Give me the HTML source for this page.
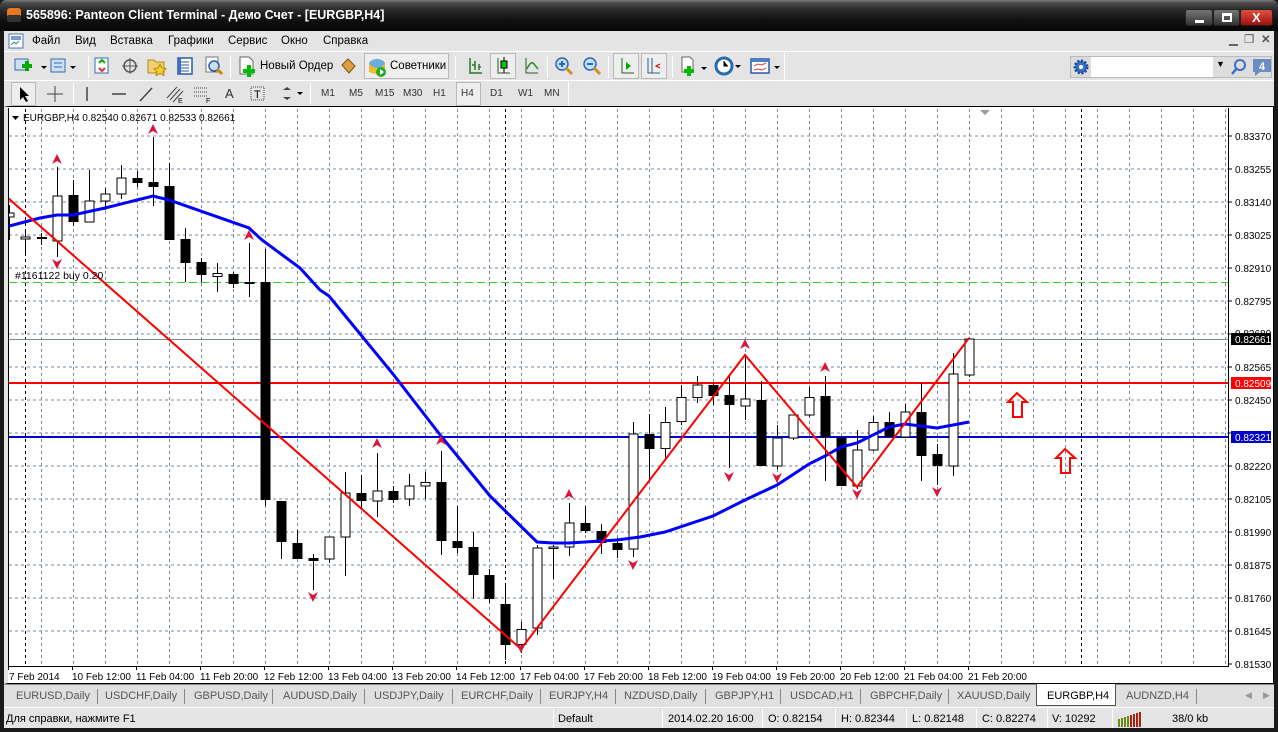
<!DOCTYPE html>
<html><head><meta charset="utf-8"><style>
*{margin:0;padding:0;box-sizing:border-box}
body{width:1278px;height:732px;overflow:hidden;background:#1a1a1a;font-family:"Liberation Sans",Tahoma,sans-serif;font-size:11px;color:#000;position:relative}
.a{position:absolute;white-space:nowrap}
#title{left:0;top:0;width:1278px;height:31px;background:linear-gradient(#7a7a7a 0,#4a4a4a 3px,#2a2a2a 10px,#111 20px,#050505 31px);border-radius:6px 6px 0 0}
#title span{position:absolute;left:26px;top:8px;color:#fff;font-weight:bold;font-size:12.5px}
.wb{top:9px;height:17px;border:1px solid #222;border-radius:3px;background:linear-gradient(#777,#333)}
#menu{left:4px;top:31px;width:1270px;height:20px;background:#e4e4e4}
#tb1{left:4px;top:51px;width:1270px;height:29px;background:#e4e4e4;border-top:1px solid #fff}
#tb2{left:4px;top:80px;width:1270px;height:26px;background:#e4e4e4;border-top:1px solid #fff}
.sep{position:absolute;width:1px;background:#a0a0a0;border-right:1px solid #fff}
#chartbg{left:4px;top:106px;width:1270px;height:578px;background:#fff;border:1px solid #000;border-left:4px solid #e4e4e4}
#tabs{left:4px;top:684px;width:1270px;height:23px;background:#e0e0e0;border-top:1px solid #888}
#status{left:4px;top:707px;width:1270px;height:21px;background:#e4e4e4;border-top:1px solid #fff}
.tab{position:absolute;top:5px;color:#555;font-size:11px}
.ts{position:absolute;top:4px;width:1px;height:15px;background:#888}
.st{position:absolute;top:5px;font-size:11px}
.ss{position:absolute;top:1px;width:1px;height:19px;background:#a0a0a0;border-right:1px solid #fff}
.m{position:absolute;top:4px;font-size:11.5px}
.tf{position:absolute;top:7px;font-size:10px;color:#333}
.ic{position:absolute}
</style></head><body>
<div class="a" id="title"><svg class="ic" style="left:6px;top:7px" width="16" height="16"><rect x="1" y="1" width="14" height="14" rx="3" fill="#e87820"/><rect x="1" y="8" width="14" height="7" rx="2" fill="#333"/></svg><span>565896: Panteon Client Terminal - Демо Счет - [EURGBP,H4]</span>
<div class="a wb" style="left:1185px;width:28px"><div style="position:absolute;left:9px;top:10px;width:9px;height:3px;background:#fff"></div></div>
<div class="a wb" style="left:1213px;width:27px"><div style="position:absolute;left:8px;top:3px;width:10px;height:9px;border:2px solid #fff;border-top-width:3px"></div></div>
<div class="a wb" style="left:1240px;width:33px;background:linear-gradient(#e05040,#a01010)"><span style="left:11px;top:0px;font-size:13px;font-weight:bold">X</span></div>
</div>
<div class="a" id="menu">
<svg class="ic" style="left:4px;top:2px" width="16" height="16"><rect x="1" y="1" width="14" height="14" fill="#fff" stroke="#4a78b0"/><rect x="3" y="3" width="10" height="4" fill="#7aa0d0"/><path d="M3 12l3-3 2 2 3-3" stroke="#4a78b0" fill="none"/></svg>
<span class="m" style="left:28px">Файл</span><span class="m" style="left:71px">Вид</span><span class="m" style="left:106px">Вставка</span><span class="m" style="left:164px">Графики</span><span class="m" style="left:224px">Сервис</span><span class="m" style="left:277px">Окно</span><span class="m" style="left:319px">Справка</span>
<span class="m" style="left:1225px;top:1px;color:#555">▁</span><span class="m" style="left:1240px;top:1px;color:#555">❐</span><span class="m" style="left:1257px;top:1px;color:#555;font-weight:bold">✕</span>
</div>
<div class="a" id="tb1">
<svg class="ic" style="left:10px;top:5px" width="36" height="20"><rect x="1" y="2" width="13" height="11" fill="#cfe0f4" stroke="#3a6aa8"/><path d="M8 9h10M13 4v10" stroke="#0a0" stroke-width="4"/><path d="M27 9l3 3 3-3z" fill="#000"/></svg>
<svg class="ic" style="left:46px;top:5px" width="30" height="20"><rect x="1" y="2" width="14" height="13" fill="#cfe0f4" stroke="#3a6aa8"/><path d="M4 6h8M4 10h8" stroke="#3a6aa8"/><path d="M20 9l3 3 3-3z" fill="#000"/></svg>
<div class="sep" style="left:84px;top:4px;height:22px"></div>
<svg class="ic" style="left:89px;top:5px" width="18" height="18"><rect x="2" y="1" width="13" height="15" fill="#fff" stroke="#3a6aa8"/><path d="M6 6l3-3 3 3" stroke="#0a0" stroke-width="2" fill="none"/><path d="M6 11l3 3 3-3" stroke="#d33" stroke-width="2" fill="none"/></svg>
<svg class="ic" style="left:117px;top:5px" width="18" height="18"><circle cx="9" cy="9" r="6" stroke="#555" fill="none" stroke-width="1.5"/><path d="M9 1v16M1 9h16" stroke="#555"/></svg>
<svg class="ic" style="left:143px;top:4px" width="20" height="20"><path d="M1 4h6l2 2h8v11H1z" fill="#f0d070" stroke="#b08a20"/><path d="M13 8l2 4 4 .5-3 3 1 4-4-2-4 2 1-4-3-3 4-.5z" fill="#f8d020" stroke="#b08a20"/></svg>
<svg class="ic" style="left:172px;top:5px" width="18" height="18"><rect x="2" y="1" width="14" height="16" fill="#fff" stroke="#2a5aa0" stroke-width="1.5"/><path d="M5 5h8M5 8h8M5 11h8M5 14h8" stroke="#2a5aa0"/><rect x="2" y="1" width="3" height="16" fill="#3a70c0"/></svg>
<svg class="ic" style="left:200px;top:4px" width="20" height="20"><rect x="2" y="1" width="12" height="15" fill="#fff" stroke="#777"/><circle cx="10" cy="10" r="5" fill="#cde" stroke="#2a5aa0" stroke-width="1.5"/><path d="M13 13l5 5" stroke="#c80" stroke-width="3"/></svg>
<div class="sep" style="left:226px;top:4px;height:22px"></div>
<svg class="ic" style="left:233px;top:4px" width="22" height="22"><path d="M3 1h9l4 4v13H3z" fill="#fff" stroke="#666"/><path d="M6 15h12M12 9v12" stroke="#0b0" stroke-width="4"/></svg>
<span class="m" style="left:256px;top:8px;font-size:11.5px">Новый Ордер</span>
<svg class="ic" style="left:335px;top:5px" width="18" height="18"><path d="M3 8l6-6 7 7-6 7z" fill="#d8a040" stroke="#805010"/></svg>
<div class="a" style="left:360px;top:1px;width:85px;height:26px;border:1px solid #b8b8b8;background:#eee"></div>
<svg class="ic" style="left:363px;top:4px" width="20" height="22"><ellipse cx="10" cy="8" rx="8" ry="5" fill="#6aaedc"/><path d="M2 8q8 8 16 0v8q-8 4-16 0z" fill="#f0c020"/><circle cx="14" cy="16" r="5" fill="#2a2"/><path d="M13 13l4 3-4 3z" fill="#fff"/></svg>
<span class="m" style="left:386px;top:8px">Советники</span>
<div class="sep" style="left:451px;top:4px;height:22px"></div>
<svg class="ic" style="left:462px;top:4px" width="18" height="20"><path d="M4 2v15h12M9 5v9M13 8v6M9 9h-3M13 11h2" stroke="#2a7a2a" stroke-width="1.5" fill="none"/></svg>
<div class="a" style="left:486px;top:1px;width:26px;height:26px;border:1px solid #b8b8b8;background:#eee"></div>
<svg class="ic" style="left:490px;top:4px" width="18" height="20"><path d="M4 2v15h12" stroke="#2a5a2a" fill="none"/><path d="M10 1v16" stroke="#000"/><rect x="7" y="5" width="6" height="7" fill="#0c0" stroke="#000"/></svg>
<svg class="ic" style="left:518px;top:4px" width="18" height="20"><path d="M4 2v15h12" stroke="#2a5a2a" fill="none"/><path d="M5 13q4-9 7-5l4 5" stroke="#2a8a2a" stroke-width="1.5" fill="none"/></svg>
<div class="sep" style="left:543px;top:4px;height:22px"></div>
<svg class="ic" style="left:550px;top:4px" width="20" height="20"><circle cx="8" cy="8" r="6" fill="#bfe0fa" stroke="#2a6ab0" stroke-width="1.5"/><path d="M5 8h6M8 5v6" stroke="#2a6ab0" stroke-width="2"/><path d="M12 12l6 6" stroke="#d09020" stroke-width="3"/></svg>
<svg class="ic" style="left:578px;top:4px" width="20" height="20"><circle cx="8" cy="8" r="6" fill="#bfe0fa" stroke="#2a6ab0" stroke-width="1.5"/><path d="M5 8h6" stroke="#2a6ab0" stroke-width="2"/><path d="M12 12l6 6" stroke="#d09020" stroke-width="3"/></svg>
<div class="sep" style="left:604px;top:4px;height:22px"></div>
<div class="a" style="left:609px;top:1px;width:26px;height:26px;border:1px solid #b8b8b8;background:#eee"></div>
<svg class="ic" style="left:613px;top:4px" width="18" height="20"><path d="M5 2v15h12" stroke="#2a5a2a" fill="none"/><path d="M9 6l5 4-5 4z" fill="#0a0"/></svg>
<div class="a" style="left:637px;top:1px;width:26px;height:26px;border:1px solid #b8b8b8;background:#eee"></div>
<svg class="ic" style="left:641px;top:4px" width="18" height="20"><path d="M3 2v15h12M7 2v15" stroke="#2a5a8a" fill="none"/><path d="M15 8l-4 2 4 2" stroke="#c00" fill="none"/></svg>
<div class="sep" style="left:668px;top:4px;height:22px"></div>
<svg class="ic" style="left:675px;top:4px" width="30" height="22"><path d="M3 1h8l3 3v12H3z" fill="#fff" stroke="#666"/><path d="M5 15h10M10 10v10" stroke="#0b0" stroke-width="4"/><path d="M22 11l3 3 3-3z" fill="#000"/></svg>
<svg class="ic" style="left:710px;top:4px" width="30" height="22"><circle cx="10" cy="10" r="8" fill="#fff" stroke="#2a6ab0" stroke-width="3"/><path d="M10 5v5h4" stroke="#000"/><path d="M21 9l3 3 3-3z" fill="#000"/></svg>
<svg class="ic" style="left:746px;top:4px" width="32" height="22"><rect x="1" y="3" width="18" height="14" fill="#fff" stroke="#2a5aa0" stroke-width="1.5"/><rect x="1" y="3" width="18" height="3" fill="#4a80c8"/><path d="M4 10l4-2 4 1 4-2M4 14l4-1 4 1 4-2" stroke="#c44" fill="none"/><path d="M24 10l3 3 3-3z" fill="#000"/></svg>
<div class="sep" style="left:780px;top:0px;height:28px"></div>
<div class="a" style="left:1066px;top:4px;width:202px;height:22px;border:1px solid #bbb;background:#ddd"></div>
<svg class="ic" style="left:1068px;top:6px" width="18" height="18"><circle cx="9" cy="9" r="6" fill="#3a70c8" stroke="#1a4a9a" stroke-width="3" stroke-dasharray="2 1.5"/><circle cx="9" cy="9" r="2" fill="#fff"/></svg>
<div class="a" style="left:1087px;top:5px;width:122px;height:20px;background:#fff"></div>
<span class="m" style="left:1212px;top:7px;font-size:9px">▼</span>
<svg class="ic" style="left:1226px;top:6px" width="18" height="18"><circle cx="10" cy="7" r="5" fill="none" stroke="#3a70c8" stroke-width="2"/><path d="M7 10l-5 6" stroke="#3a70c8" stroke-width="2.5"/></svg>
<svg class="ic" style="left:1247px;top:5px" width="22" height="20"><path d="M2 2h18v13H9l-5 4v-4H2z" fill="#6a8cc0"/><text x="8" y="13" fill="#fff" font-size="11" font-weight="bold" font-family="Liberation Sans">4</text></svg>
</div>
<div class="a" id="tb2">
<div class="a" style="left:7px;top:1px;width:25px;height:24px;border:1px solid #b8b8b8;background:#eee"></div>
<svg class="ic" style="left:12px;top:4px" width="16" height="18"><path d="M4 2v13l3-3 3 5 2-1-3-5h4z" fill="#000"/></svg>
<svg class="ic" style="left:42px;top:4px" width="18" height="18"><path d="M9 1v16M1 9h16" stroke="#444"/></svg>
<div class="sep" style="left:69px;top:3px;height:20px"></div>
<svg class="ic" style="left:78px;top:4px" width="10" height="18"><path d="M5 2v14" stroke="#444" stroke-width="1.5"/></svg>
<svg class="ic" style="left:106px;top:4px" width="18" height="18"><path d="M2 9h14" stroke="#444" stroke-width="1.5"/></svg>
<svg class="ic" style="left:133px;top:4px" width="18" height="18"><path d="M3 16l12-13" stroke="#444" stroke-width="1.5"/></svg>
<svg class="ic" style="left:160px;top:3px" width="22" height="20"><path d="M3 14l10-11M6 16l10-11M9 18l10-11" stroke="#444"/><text x="14" y="19" font-size="7" font-family="Liberation Sans">E</text></svg>
<svg class="ic" style="left:188px;top:3px" width="22" height="20"><path d="M2 4h14M2 8h14M2 12h14" stroke="#444" stroke-dasharray="1 1"/><text x="14" y="19" font-size="7" font-family="Liberation Sans">F</text></svg>
<span class="m" style="left:221px;top:5px;font-size:13px;color:#333">A</span>
<svg class="ic" style="left:245px;top:4px" width="18" height="18"><rect x="2" y="2" width="13" height="13" fill="none" stroke="#444" stroke-dasharray="1 1"/><text x="5" y="13" font-size="11" font-family="Liberation Sans">T</text></svg>
<svg class="ic" style="left:276px;top:4px" width="26" height="18"><path d="M3 5l4-3 4 3zM3 12l4 3 4-3z" fill="#444"/><path d="M17 7l3 3 3-3z" fill="#000"/></svg>
<div class="sep" style="left:306px;top:3px;height:20px"></div>
<span class="tf" style="left:317px">M1</span><span class="tf" style="left:345px">M5</span><span class="tf" style="left:371px">M15</span><span class="tf" style="left:399px">M30</span><span class="tf" style="left:429px">H1</span>
<div class="a" style="left:452px;top:1px;width:25px;height:24px;border:1px solid #b8b8b8;background:#eee"></div>
<span class="tf" style="left:457px">H4</span><span class="tf" style="left:486px">D1</span><span class="tf" style="left:514px">W1</span><span class="tf" style="left:540px">MN</span>
<div class="sep" style="left:564px;top:0px;height:25px"></div>
</div>
<div class="a" id="chartbg"></div>
<svg class="a" style="left:0;top:0" width="1278" height="732" font-family="Liberation Sans, sans-serif" font-size="10">
<defs><clipPath id="cc"><rect x="9" y="109" width="1219" height="557"/></clipPath></defs>
<g clip-path="url(#cc)">
<g stroke="#778899" stroke-dasharray="3 3" stroke-width="1" fill="none">
<path d="M9 136H1228M9 169H1228M9 202H1228M9 235H1228M9 268H1228M9 301H1228M9 334H1228M9 367H1228M9 400H1228M9 433H1228M9 466H1228M9 499H1228M9 532H1228M9 565H1228M9 598H1228M9 631H1228"/>
<path d="M41.5 109V665M73.5 109V665M105.5 109V665M137.5 109V665M169.5 109V665M201.5 109V665M233.5 109V665M265.5 109V665M297.5 109V665M329.5 109V665M361.5 109V665M393.5 109V665M425.5 109V665M457.5 109V665M489.5 109V665M521.5 109V665M553.5 109V665M585.5 109V665M617.5 109V665M649.5 109V665M681.5 109V665M713.5 109V665M745.5 109V665M777.5 109V665M809.5 109V665M841.5 109V665M873.5 109V665M905.5 109V665M937.5 109V665M969.5 109V665M1001.5 109V665M1033.5 109V665M1065.5 109V665M1097.5 109V665M1129.5 109V665M1161.5 109V665M1193.5 109V665M1225.5 109V665"/>
</g>
<g stroke="#000" stroke-dasharray="3 3"><path d="M25.5 109V665M505.5 109V665M1081.5 109V665"/></g>
<path d="M9 282.5H1228" stroke="#32cd32" stroke-dasharray="8 4"/>
<path d="M9 339.5H1228" stroke="#778899"/>
<path d="M9 383H1228" stroke="#f00" stroke-width="2"/>
<path d="M9 437H1228" stroke="#0000c8" stroke-width="2"/>
<g stroke="#000" stroke-width="1">
<path d="M9.5 205V240M25.5 230V256M41.5 233V245M57.5 167V257M73.5 180V226M89.5 170V222M105.5 188V210M121.5 165V199M137.5 171V187M153.5 137V206M169.5 163V240M185.5 228V282M201.5 258V282M217.5 263V292M233.5 272V288M249.5 243V297M265.5 249V506M281.5 501V559M297.5 530V558M313.5 554V590M329.5 537V563M345.5 472V576M361.5 475V510M377.5 453V517M393.5 486V503M409.5 474V506M425.5 472V499M441.5 451V555M457.5 506V553M473.5 532V599M489.5 569V603M505.5 583V660M521.5 622V653M537.5 545V635M553.5 545V579M569.5 503V556M585.5 506V533M601.5 524V554M617.5 538V558M633.5 422V557M649.5 414V481M665.5 407V460M681.5 385V425M697.5 376V403M713.5 383V405M729.5 374V468M745.5 354V420M761.5 381V466M777.5 425V469M793.5 415V440M809.5 387V417M825.5 376V481M841.5 436V486M857.5 430V489M873.5 416V451M889.5 412V437M905.5 404V437M921.5 383V481M937.5 444V485M953.5 353V476M969.5 338V377"/>
</g>
<g fill="#000">
<rect x="37" y="237" width="10" height="2"/><rect x="68.5" y="195" width="10" height="27"/><rect x="132.5" y="178" width="10" height="5"/><rect x="148.5" y="182" width="10" height="5"/><rect x="164.5" y="186" width="10" height="54"/><rect x="180.5" y="239" width="10" height="24"/><rect x="196.5" y="262" width="10" height="13"/><rect x="228.5" y="274" width="10" height="10"/><rect x="244.5" y="282" width="10" height="2"/><rect x="260.5" y="282" width="10" height="218"/><rect x="276.5" y="501" width="10" height="41"/><rect x="292.5" y="543" width="10" height="16"/><rect x="308.5" y="558" width="10" height="3"/><rect x="356.5" y="493" width="10" height="8"/><rect x="388.5" y="491" width="10" height="9"/><rect x="436.5" y="482" width="10" height="59"/><rect x="452.5" y="541" width="10" height="7"/><rect x="468.5" y="547" width="10" height="28"/><rect x="484.5" y="575" width="10" height="24"/><rect x="500.5" y="604" width="10" height="41"/><rect x="580.5" y="523" width="10" height="8"/><rect x="596.5" y="531" width="10" height="12"/><rect x="612.5" y="543" width="10" height="7"/><rect x="644.5" y="434" width="10" height="15"/><rect x="708.5" y="385" width="10" height="11"/><rect x="724.5" y="395" width="10" height="10"/><rect x="756.5" y="400" width="10" height="66"/><rect x="820.5" y="396" width="10" height="41"/><rect x="836.5" y="438" width="10" height="48"/><rect x="884.5" y="422" width="10" height="15"/><rect x="916.5" y="412" width="10" height="44"/><rect x="932.5" y="454" width="10" height="12"/>
</g>
<g fill="#fff" stroke="#000">
<rect x="5" y="213" width="9" height="4"/>
<rect x="21" y="237" width="9" height="2"/><rect x="53" y="196" width="9" height="45"/><rect x="85" y="201" width="9" height="21"/><rect x="101" y="194" width="9" height="7"/><rect x="117" y="178" width="9" height="16"/><rect x="213" y="273.5" width="9" height="3"/><rect x="325" y="537" width="9" height="22"/><rect x="341" y="493" width="9" height="44"/><rect x="373" y="491" width="9" height="10"/><rect x="405" y="486" width="9" height="13"/><rect x="421" y="482.5" width="9" height="3.5"/><rect x="517" y="629.5" width="9" height="15"/><rect x="533" y="548" width="9" height="80"/><rect x="549" y="547" width="9" height="1.5"/><rect x="565" y="523" width="9" height="24"/><rect x="629" y="434" width="9" height="115"/><rect x="661" y="422.5" width="9" height="26"/><rect x="677" y="397.5" width="9" height="24"/><rect x="693" y="385" width="9" height="12.5"/><rect x="741" y="399" width="9" height="7"/><rect x="773" y="438" width="9" height="28"/><rect x="789" y="415" width="9" height="23"/><rect x="805" y="397.5" width="9" height="17.5"/><rect x="853" y="450" width="9" height="36"/><rect x="869" y="422.5" width="9" height="27.5"/><rect x="901" y="412" width="9" height="25"/><rect x="949" y="374" width="9" height="92"/><rect x="965" y="339" width="9" height="36"/>
</g>
<polyline points="9,226 40,218 57,215 73,215 105,208 137,200 153,196 169,200 249,228 262,240 300,268 320,290 329,296 393,374 441,436 490,496 537,542 553,543 569,543 617,540 640,537 665,532 713,516 745,500 777,485 809,464 825,456 841,447 857,443 889,427 905,424 937,428 969,422" fill="none" stroke="#0000ff" stroke-width="3"/>
<polyline points="8,198 521,649 745,355 857,487 969,338" fill="none" stroke="#f00" stroke-width="2"/>
<g fill="#dc143c">
<path d="M52 164l5-10 5 10-5-3z"/><path d="M148 134l5-10 5 10-5-3z"/><path d="M244 240l5-10 5 10-5-3z"/><path d="M372 448l5-10 5 10-5-3z"/><path d="M436 445l5-10 5 10-5-3z"/><path d="M564 499l5-10 5 10-5-3z"/><path d="M740 349l5-10 5 10-5-3z"/><path d="M820 372l5-10 5 10-5-3z"/>
<path d="M52 259l5 10 5-10-5 3z"/><path d="M308 592l5 10 5-10-5 3z"/><path d="M516 643l5 10 5-10-5 3z"/><path d="M628 560l5 10 5-10-5 3z"/><path d="M724 472l5 10 5-10-5 3z"/><path d="M772 473l5 10 5-10-5 3z"/><path d="M852 489l5 10 5-10-5 3z"/><path d="M932 487l5 10 5-10-5 3z"/>
</g>
<g fill="none" stroke="#f00" stroke-width="2">
<path d="M1008 402L1017 393L1027 402H1022V417H1013V402Z"/><path d="M1056 458L1065 449L1075 458H1070V473H1061V458Z"/>
</g>
</g>
<path d="M980 110h10l-5 5z" fill="#999"/>
<path d="M8.5 108V666.5H1228.5V108" fill="none" stroke="#000"/>
<path d="M12 116h7l-3.5 4z" fill="#000"/>
<text x="23" y="121" font-size="10">EURGBP,H4  0.82540 0.82671 0.82533 0.82661</text>
<text x="15" y="279" font-size="10.5">#1161122 buy 0.20</text>
<g stroke="#000"><path d="M1228 136h4M1228 169h4M1228 202h4M1228 235h4M1228 268h4M1228 301h4M1228 334h4M1228 367h4M1228 400h4M1228 433h4M1228 466h4M1228 499h4M1228 532h4M1228 565h4M1228 598h4M1228 631h4M1228 664h4"/>
<path d="M8.5 666v4M72.5 666v4M136.5 666v4M200.5 666v4M264.5 666v4M328.5 666v4M392.5 666v4M456.5 666v4M520.5 666v4M584.5 666v4M648.5 666v4M712.5 666v4M776.5 666v4M840.5 666v4M904.5 666v4M968.5 666v4"/></g>
<g font-size="10">
<text x="1235" y="140">0.83370</text><text x="1235" y="173">0.83255</text><text x="1235" y="206">0.83140</text><text x="1235" y="239">0.83025</text><text x="1235" y="272">0.82910</text><text x="1235" y="305">0.82795</text><text x="1235" y="337">0.82680</text><text x="1235" y="371">0.82565</text><text x="1235" y="404">0.82450</text><text x="1235" y="470">0.82220</text><text x="1235" y="503">0.82105</text><text x="1235" y="536">0.81990</text><text x="1235" y="569">0.81875</text><text x="1235" y="602">0.81760</text><text x="1235" y="635">0.81645</text><text x="1235" y="668">0.81530</text>
<rect x="1231" y="333" width="40" height="12" fill="#000"/><text x="1235" y="343" fill="#fff">0.82661</text>
<rect x="1231" y="377" width="40" height="12" fill="#f00"/><text x="1235" y="387" fill="#fff">0.82509</text>
<rect x="1231" y="431" width="40" height="12" fill="#0000c8"/><text x="1235" y="441" fill="#fff">0.82321</text>
</g>
<g font-size="10">
<text x="9" y="680">7 Feb 2014</text><text x="72" y="680">10 Feb 12:00</text><text x="136" y="680">11 Feb 04:00</text><text x="200" y="680">11 Feb 20:00</text><text x="264" y="680">12 Feb 12:00</text><text x="328" y="680">13 Feb 04:00</text><text x="392" y="680">13 Feb 20:00</text><text x="456" y="680">14 Feb 12:00</text><text x="520" y="680">17 Feb 04:00</text><text x="584" y="680">17 Feb 20:00</text><text x="648" y="680">18 Feb 12:00</text><text x="712" y="680">19 Feb 04:00</text><text x="776" y="680">19 Feb 20:00</text><text x="840" y="680">20 Feb 12:00</text><text x="904" y="680">21 Feb 04:00</text><text x="968" y="680">21 Feb 20:00</text>
</g>
</svg>
<div class="a" id="tabs">
<span class="tab" style="left:12px">EURUSD,Daily</span><div class="ts" style="left:93px"></div>
<span class="tab" style="left:101px">USDCHF,Daily</span><div class="ts" style="left:180px"></div>
<span class="tab" style="left:190px">GBPUSD,Daily</span><div class="ts" style="left:268px"></div>
<span class="tab" style="left:279px">AUDUSD,Daily</span><div class="ts" style="left:360px"></div>
<span class="tab" style="left:370px">USDJPY,Daily</span><div class="ts" style="left:448px"></div>
<span class="tab" style="left:457px">EURCHF,Daily</span><div class="ts" style="left:536px"></div>
<span class="tab" style="left:545px">EURJPY,H4</span><div class="ts" style="left:611px"></div>
<span class="tab" style="left:620px">NZDUSD,Daily</span><div class="ts" style="left:701px"></div>
<span class="tab" style="left:711px">GBPJPY,H1</span><div class="ts" style="left:776px"></div>
<span class="tab" style="left:786px">USDCAD,H1</span><div class="ts" style="left:856px"></div>
<span class="tab" style="left:866px">GBPCHF,Daily</span><div class="ts" style="left:944px"></div>
<span class="tab" style="left:953px">XAUUSD,Daily</span>
<div class="a" style="left:1032px;top:-1px;width:80px;height:22px;background:#fff;border:1px solid #555;border-top:none"></div>
<span class="tab" style="left:1043px;color:#000">EURGBP,H4</span>
<span class="tab" style="left:1122px">AUDNZD,H4</span><div class="ts" style="left:1192px"></div>
<span class="tab" style="left:1241px;font-size:9px;color:#999">◀</span><span class="tab" style="left:1259px;font-size:9px;color:#999">▶</span>
</div>
<div class="a" id="status">
<span class="st" style="left:2px">Для справки, нажмите F1</span>
<div class="ss" style="left:549px"></div><span class="st" style="left:554px">Default</span>
<div class="ss" style="left:658px"></div><span class="st" style="left:664px">2014.02.20 16:00</span>
<div class="ss" style="left:758px"></div><span class="st" style="left:764px">O: 0.82154</span>
<div class="ss" style="left:831px"></div><span class="st" style="left:837px">H: 0.82344</span>
<div class="ss" style="left:902px"></div><span class="st" style="left:908px">L: 0.82148</span>
<div class="ss" style="left:972px"></div><span class="st" style="left:978px">C: 0.82274</span>
<div class="ss" style="left:1043px"></div><span class="st" style="left:1048px">V: 10292</span>
<div class="ss" style="left:1108px"></div>
<svg class="ic" style="left:1113px;top:3px" width="26" height="16"><g stroke-width="2"><path d="M2 16V8M5 16V7M8 16V6M11 16V5" stroke="#6a8a1a"/><path d="M14 16V4M17 16V3M20 16V2M23 16V1" stroke="#b02010"/></g></svg>
<span class="st" style="left:1168px">38/0 kb</span>
</div>
</body></html>
